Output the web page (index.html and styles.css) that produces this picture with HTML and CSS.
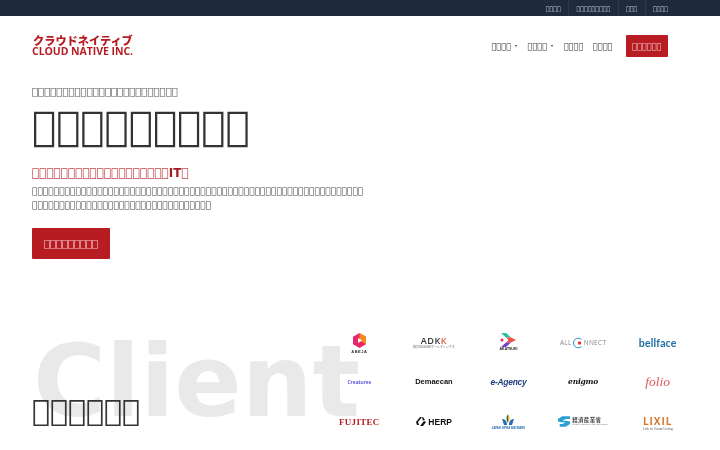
FILE: index.html
```html
<!DOCTYPE html>
<html lang="ja">
<head>
<meta charset="utf-8">
<title>Cloud Native</title>
<link rel="stylesheet" href="styles.css">
</head>
<body>
<div class="topbar">
  <a class="toplink">&#xE000;&#xE000;&#xE000;&#xE000;</a>
  <a class="toplink">&#xE000;&#xE000;&#xE000;&#xE000;&#xE000;&#xE000;&#xE000;&#xE000;&#xE000;</a>
  <a class="toplink">&#xE000;&#xE000;&#xE000;</a>
  <a class="toplink">&#xE000;&#xE000;&#xE000;&#xE000;</a>
</div>
<header class="header">
  <div class="logo">
    <span class="logo-ja">クラウドネイティブ</span>
    <span class="logo-en">CLOUD NATIVE INC.</span>
  </div>
  <nav class="nav">
    <a class="navlink">&#xE000;&#xE000;&#xE000;&#xE000;<span class="caret"></span></a>
    <a class="navlink">&#xE000;&#xE000;&#xE000;&#xE000;<span class="caret"></span></a>
    <a class="navlink">&#xE000;&#xE000;&#xE000;&#xE000;</a>
    <a class="navlink">&#xE000;&#xE000;&#xE000;&#xE000;</a>
    <a class="navcta">&#xE000;&#xE000;&#xE000;&#xE000;&#xE000;&#xE000;</a>
  </nav>
</header>
<section class="hero">
  <p class="eyebrow">&#xE000;&#xE000;&#xE000;&#xE000;&#xE000;&#xE000;&#xE000;&#xE000;&#xE000;&#xE000;&#xE000;&#xE000;&#xE000;&#xE000;&#xE000;&#xE000;&#xE000;&#xE000;&#xE000;&#xE000;&#xE000;&#xE000;&#xE000;&#xE000;</p>
  <h1 class="title">&#xE000;&#xE000;&#xE000;&#xE000;&#xE000;&#xE000;&#xE000;&#xE000;&#xE000;</h1>
  <h2 class="lead">&#xE000;&#xE000;&#xE000;&#xE000;&#xE000;&#xE000;&#xE000;&#xE000;&#xE000;&#xE000;&#xE000;&#xE000;&#xE000;&#xE000;&#xE000;&#xE000;&#xE000;&#xE000;&#xE000;<b class="lead-it">IT</b>&#xE000;</h2>
  <p class="desc">&#xE000;&#xE000;&#xE000;&#xE000;&#xE000;&#xE000;&#xE000;&#xE000;&#xE000;&#xE000;&#xE000;&#xE000;&#xE000;&#xE000;&#xE000;&#xE000;&#xE000;&#xE000;&#xE000;&#xE000;&#xE000;&#xE000;&#xE000;&#xE000;&#xE000;&#xE000;&#xE000;&#xE000;&#xE000;&#xE000;&#xE000;&#xE000;&#xE000;&#xE000;&#xE000;&#xE000;&#xE000;&#xE000;&#xE000;&#xE000;&#xE000;&#xE000;&#xE000;&#xE000;&#xE000;&#xE000;&#xE000;&#xE000;&#xE000;&#xE000;&#xE000;&#xE000;&#xE000;&#xE000;&#xE000;&#xE000;&#xE000;&#xE000;&#xE000;&#xE000;&#xE000;<br>&#xE000;&#xE000;&#xE000;&#xE000;&#xE000;&#xE000;&#xE000;&#xE000;&#xE000;&#xE000;&#xE000;&#xE000;&#xE000;&#xE000;&#xE000;&#xE000;&#xE000;&#xE000;&#xE000;&#xE000;&#xE000;&#xE000;&#xE000;&#xE000;&#xE000;&#xE000;&#xE000;&#xE000;&#xE000;&#xE000;&#xE000;&#xE000;&#xE000;</p>
  <a class="herobtn">&#xE000;&#xE000;&#xE000;&#xE000;&#xE000;&#xE000;&#xE000;&#xE000;&#xE000;</a>
</section>
<section class="client">
  <div class="watermark">Client</div>
  <h2 class="clienthead">&#xE000;&#xE000;&#xE000;&#xE000;&#xE000;&#xE000;</h2>
  <div class="grid">
    <div class="cell abeja">
      <svg width="15" height="15" viewBox="0 0 15 15"><path fill="#e9266d" d="M7.5 0 14 3.700v7.600L7.500 15 1 11.300V3.700z"/><path fill="#f58a1f" d="M7.500 0 14 3.700v7.600L7.500 7.500z"/><path fill="#fff" d="M6 5l4 2.500L6 10z"/></svg>
      <span class="t-abeja">ABEJA</span>
    </div>
    <div class="cell adk"><span class="t-adk">ADK<span class="adk-k">K</span></span><span class="t-adks">株式会社ADKホールディングス</span></div>
    <div class="cell akatsuki">
      <svg width="16" height="14" viewBox="0 0 16 14"><path fill="#25c0a0" d="M1 0h5l5 4.500H6z"/><path fill="#f0503c" d="M6 4.500h5l5 2.500-5 2.500H6l2.500-2.500z"/><path fill="#7a3fd0" d="M1 14h5l5-4.500H6z"/><circle cx="2" cy="7" r="1.500" fill="#e9266d"/></svg>
      <span class="t-aka">AKATSUKI</span>
    </div>
    <div class="cell allc"><span class="t-allc">ALL<svg width="12" height="12" viewBox="0 0 12 12"><path d="M9.500 2.500a4.800 4.800 0 1 0 0 7" fill="none" stroke="#2f8fc6" stroke-width="1"/><circle cx="7.500" cy="6" r="1.700" fill="#e2332f"/></svg>NNECT</span></div>
    <div class="cell"><span class="t-bell">bellface</span></div>

    <div class="cell"><span class="t-crea">Creatures</span></div>
    <div class="cell"><span class="t-dem">Demaecan</span></div>
    <div class="cell"><span class="t-eag">e-Agency</span></div>
    <div class="cell"><span class="t-eni">enigmo</span></div>
    <div class="cell"><span class="t-folio">folio</span></div>

    <div class="cell"><span class="t-fuji">FUJITEC</span></div>
    <div class="cell herp">
      <svg width="10" height="9" viewBox="0 0 10 9"><path fill="#111" d="M0 5 4 0h2L2 5l1 3H1zM4 9l4-5 2 1-3 4z"/><path fill="#111" d="M7 0l2 3-2 .500-1-3z"/></svg>
      <span class="t-herp">HERP</span>
    </div>
    <div class="cell jpn">
      <svg width="12" height="12" viewBox="0 0 12 12"><path fill="#e8b21f" d="M6 0c2 3 2 6 0 9z"/><path fill="#1e6f3c" d="M6 0C4 3 4 6 6 9z"/><path fill="#2a6fb5" d="M0 5c3 0 5 2 5 6H2zM12 5c-3 0-5 2-5 6h3z"/></svg>
      <span class="t-jpn">JAPAN INFRA WAYMARK</span>
    </div>
    <div class="cell meti">
      <svg width="12" height="11" viewBox="0 0 14 12"><path fill="#2a9fd6" d="M14 0H5L0 3v3l4 1h5L5 9l-3 0v3h7l5-3V6l-5-1H5l4-2h5z"/></svg>
      <span class="t-meti"><span class="t-metij">経済産業省</span><span class="t-metie">Ministry of Economy, Trade and Industry</span></span>
    </div>
    <div class="cell lixil"><span class="t-lixil">LIXIL</span><span class="t-lixils">Link to Good Living</span></div>
  </div>
</section>
</body>
</html>
```
FILE: styles.css
```css
* { box-sizing: border-box; }
html, body { margin: 0; padding: 0; }
body {
  width: 720px;
  height: 450px;
  overflow: hidden;
  background: #fff;
  color: #333;
  font-family: "DejaVu Sans", sans-serif;
  filter: blur(.3px);
}
p, h1, h2 { margin: 0; font-weight: 400; }

.topbar {
  height: 16px;
  background: #1f2a3c;
  display: flex;
  justify-content: flex-end;
  padding-right: 44.500px;
}
.toplink {
  display: flex;
  align-items: center;
  padding: 0 7.400px;
  font-size: 6.250px;
  color: #ccd;
  border-left: 1px solid #2d3a4e;
}
.toplink:first-child { border-left: 0; }

.header {
  height: 60px;
  padding: 0 52px 0 32px;
  display: flex;
  align-items: center;
  justify-content: space-between;
}
.logo { display: flex; flex-direction: column; color: #b71c23; width: 102px; }
.logo-ja {
  font: 900 11.200px/6px "Noto Sans CJK JP", sans-serif;
  padding-bottom: 4px;
  white-space: nowrap;
  margin-left: 1px;
}
.logo-en {
  font: 700 10.500px/9px "Open Sans", sans-serif;
  white-space: nowrap;
  letter-spacing: -.05px;
}
.nav { display: flex; align-items: center; gap: 9.500px; }
.navlink {
  font-size: 8.200px;
  color: #333;
  display: flex;
  align-items: center;
}
.caret {
  width: 0;
  height: 0;
  margin: 0 1.500px 0 3.500px;
  border-left: 1.500px solid transparent;
  border-right: 1.500px solid transparent;
  border-top: 2.500px solid #333;
}
.navcta {
  margin-left: 3.500px;
  height: 22px;
  padding: 0 6.500px;
  display: flex;
  align-items: center;
  background: #b71c23;
  color: #f3c6c8;
  font-size: 8.200px;
  border-radius: 1px;
}

.hero { padding: 9px 32px 0; height: 247px; }
.eyebrow { font-size: 10.150px; line-height: 14px; color: #555; }
.title { font-size: 40.300px; line-height: 48px; margin-top: 4px; color: #333; }
.lead { font-size: 12px; line-height: 16px; margin-top: 14px; color: #c24a50; }
.lead-it { font-weight: 700; color: #a51a22; }
.desc { font-size: 9px; line-height: 14px; margin-top: 3px; color: #444; letter-spacing: .03px; }
.herobtn {
  display: inline-flex;
  align-items: center;
  height: 31px;
  margin-top: 16px;
  padding: 0 12px;
  background: #b71c23;
  color: #f3c6c8;
  font-size: 10px;
  border-radius: 1px;
}

.client { position: relative; height: 127px; display: flex; padding-left: 32px; }
.watermark {
  position: absolute;
  left: 33px;
  top: 9px;
  font-size: 99.500px;
  line-height: 100px;
  font-weight: 700;
  color: #e9e9e9;
}
.clienthead {
  position: relative;
  width: 290px;
  margin-top: 70px;
  align-self: flex-start;
  font-size: 30px;
  line-height: 36px;
  color: #333;
}
.grid {
  position: relative;
  width: 373px;
  display: grid;
  grid-template-columns: repeat(5, 1fr);
  grid-auto-rows: 39.500px;
}
.cell {
  display: flex;
  flex-direction: column;
  align-items: center;
  justify-content: center;
  white-space: nowrap;
  font-family: "Liberation Sans", sans-serif;
}
.abeja { padding-top: 2px; }
.lixil { padding-top: 4px; }
.t-abeja { font: 700 4px/5px "Liberation Sans", sans-serif; letter-spacing: .5px; color: #333; margin-top: 1px; }
.t-adk { font: 600 9px/9px "Open Sans", sans-serif; color: #333; letter-spacing: .5px; }
.adk-k { color: #e2603f; }
.t-adks { font: 400 3px/5px "Noto Sans CJK JP", sans-serif; color: #666; }
.t-aka { font: 700 3.500px/5px "Liberation Sans", sans-serif; color: #222; }
.t-allc { font: 400 6.500px/12px "Open Sans", sans-serif; color: #888; display: flex; align-items: center; letter-spacing: .3px; }
.t-bell { font: 700 10.500px/12px "Lato", sans-serif; color: #1c6ea4; letter-spacing: .15px; }
.t-crea { font: 600 5px/8px "Open Sans", sans-serif; color: #3b3fd4; }
.t-dem { font: 700 7.500px/10px "Liberation Sans", sans-serif; color: #111; }
.t-eag { font: italic 700 8.500px/10px "Liberation Sans", sans-serif; color: #1d3f7e; letter-spacing: -.3px; }
.t-eni { font: italic 700 7.500px/10px "DejaVu Serif", serif; color: #111; letter-spacing: -.2px; }
.t-folio { font: italic 400 13.500px/14px "Liberation Serif", serif; color: #e2555a; }
.t-fuji { font: 700 9px/12px "Liberation Serif", serif; color: #b71c23; letter-spacing: .3px; }
.herp { flex-direction: row; gap: 2.500px; }
.t-herp { font: 700 8.500px/10px "Liberation Sans", sans-serif; color: #111; }
.t-jpn { font: 700 2.800px/4px "Liberation Sans", sans-serif; color: #2a6fb5; }
.meti { flex-direction: row; gap: 2px; }
.t-meti { display: flex; flex-direction: column; }
.t-metij { font: 700 5.500px/6px "Noto Sans CJK JP", sans-serif; color: #444; letter-spacing: .3px; }
.t-metie { font: 400 2px/3px "Liberation Sans", sans-serif; color: #777; }
.t-lixil { font: 700 10px/11px "Open Sans", sans-serif; color: #d9762a; letter-spacing: 1px; }
.t-lixils { font: 400 3.500px/5px "Liberation Sans", sans-serif; color: #666; }
```
